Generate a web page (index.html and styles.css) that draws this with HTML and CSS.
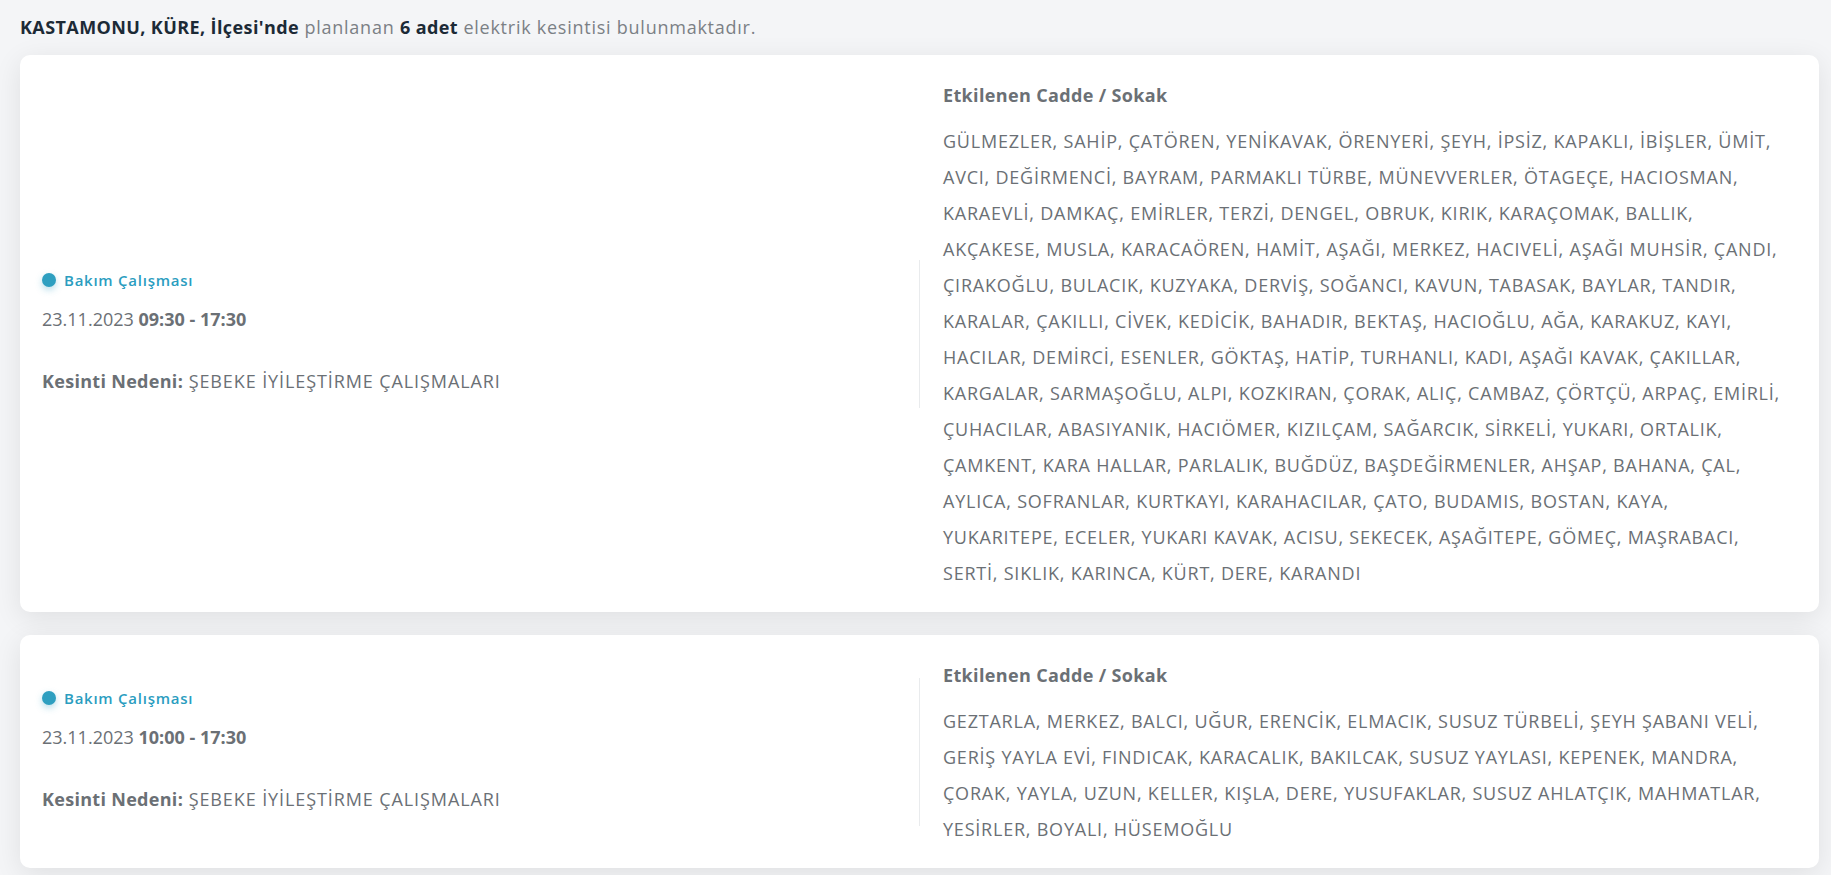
FILE: index.html
```html
<!DOCTYPE html>
<html lang="tr">
<head>
    <meta charset="UTF-8">
    <meta name="viewport" content="width=device-width, initial-scale=1.0">
    <title>Kastamonu Küre Elektrik Kesintileri</title>
    <link rel="stylesheet" href="styles.css">
</head>
<body>
    <p class="summary"><strong>KASTAMONU, KÜRE, İlçesi'nde</strong> planlanan <strong>6 adet</strong> elektrik kesintisi bulunmaktadır.</p>

    <div class="outage-card">
        <div class="outage-info">
            <div class="outage-type"><span class="dot"></span>Bakım Çalışması</div>
            <div class="outage-time">23.11.2023 <strong>09:30 - 17:30</strong></div>
            <div class="outage-reason"><strong>Kesinti Nedeni:</strong> ŞEBEKE İYİLEŞTİRME ÇALIŞMALARI</div>
        </div>
        <div class="divider"></div>
        <div class="outage-streets">
            <h4>Etkilenen Cadde / Sokak</h4>
            <p>GÜLMEZLER, SAHİP, ÇATÖREN, YENİKAVAK, ÖRENYERİ, ŞEYH, İPSİZ, KAPAKLI, İBİŞLER, ÜMİT, AVCI, DEĞİRMENCİ, BAYRAM, PARMAKLI TÜRBE, MÜNEVVERLER, ÖTAGEÇE, HACIOSMAN, KARAEVLİ, DAMKAÇ, EMİRLER, TERZİ, DENGEL, OBRUK, KIRIK, KARAÇOMAK, BALLIK, AKÇAKESE, MUSLA, KARACAÖREN, HAMİT, AŞAĞI, MERKEZ, HACIVELİ, AŞAĞI MUHSİR, ÇANDI, ÇIRAKOĞLU, BULACIK, KUZYAKA, DERVİŞ, SOĞANCI, KAVUN, TABASAK, BAYLAR, TANDIR, KARALAR, ÇAKILLI, CİVEK, KEDİCİK, BAHADIR, BEKTAŞ, HACIOĞLU, AĞA, KARAKUZ, KAYI, HACILAR, DEMİRCİ, ESENLER, GÖKTAŞ, HATİP, TURHANLI, KADI, AŞAĞI KAVAK, ÇAKILLAR, KARGALAR, SARMAŞOĞLU, ALPI, KOZKIRAN, ÇORAK, ALIÇ, CAMBAZ, ÇÖRTÇÜ, ARPAÇ, EMİRLİ, ÇUHACILAR, ABASIYANIK, HACIÖMER, KIZILÇAM, SAĞARCIK, SİRKELİ, YUKARI, ORTALIK, ÇAMKENT, KARA HALLAR, PARLALIK, BUĞDÜZ, BAŞDEĞİRMENLER, AHŞAP, BAHANA, ÇAL, AYLICA, SOFRANLAR, KURTKAYI, KARAHACILAR, ÇATO, BUDAMIS, BOSTAN, KAYA, YUKARITEPE, ECELER, YUKARI KAVAK, ACISU, SEKECEK, AŞAĞITEPE, GÖMEÇ, MAŞRABACI, SERTİ, SIKLIK, KARINCA, KÜRT, DERE, KARANDI</p>
        </div>
    </div>

    <div class="outage-card">
        <div class="outage-info">
            <div class="outage-type"><span class="dot"></span>Bakım Çalışması</div>
            <div class="outage-time">23.11.2023 <strong>10:00 - 17:30</strong></div>
            <div class="outage-reason"><strong>Kesinti Nedeni:</strong> ŞEBEKE İYİLEŞTİRME ÇALIŞMALARI</div>
        </div>
        <div class="divider"></div>
        <div class="outage-streets">
            <h4>Etkilenen Cadde / Sokak</h4>
            <p>GEZTARLA, MERKEZ, BALCI, UĞUR, ERENCİK, ELMACIK, SUSUZ TÜRBELİ, ŞEYH ŞABANI VELİ, GERİŞ YAYLA EVİ, FINDICAK, KARACALIK, BAKILCAK, SUSUZ YAYLASI, KEPENEK, MANDRA, ÇORAK, YAYLA, UZUN, KELLER, KIŞLA, DERE, YUSUFAKLAR, SUSUZ AHLATÇIK, MAHMATLAR, YESİRLER, BOYALI, HÜSEMOĞLU</p>
        </div>
    </div>
</body>
</html>
```

FILE: styles.css
```css
body {
    margin: 0;
    padding: 15px 12px 0 20px;
    background: #f4f5f7;
    font-family: "Open Sans", Arial, sans-serif;
    color: #6b7075;
}
.summary {
    margin: 0 0 16px;
    font-size: 18px;
    line-height: 24px;
    letter-spacing: 0.75px;
    color: #7b8085;
}
.summary strong {
    color: #1c2a36;
    letter-spacing: 0.4px;
}
.outage-card {
    display: flex;
    background: #fff;
    border-radius: 10px;
    box-shadow: 0 6px 28px rgba(0, 0, 0, 0.09);
    margin-bottom: 23px;
}
.outage-info,
.outage-streets {
    flex: 1 1 50%;
    box-sizing: border-box;
}
.outage-info {
    align-self: center;
    padding: 0 22px 5px;
}
.outage-type {
    display: flex;
    align-items: center;
    font-size: 15px;
    font-weight: 600;
    line-height: 20px;
    letter-spacing: 0.75px;
    color: #2b9dbf;
}
.dot {
    width: 14px;
    height: 14px;
    border-radius: 50%;
    background: #2e9fc0;
    box-shadow: 0 3px 7px rgba(46, 159, 192, 0.35);
    margin-right: 8px;
}
.outage-time {
    margin-top: 17px;
    font-size: 18px;
    line-height: 24px;
}
.outage-time strong,
.outage-reason strong {
    font-weight: 700;
}
.outage-reason {
    margin-top: 38px;
    font-size: 18px;
    line-height: 24px;
    letter-spacing: 0.9px;
}
.outage-reason strong {
    letter-spacing: 0.3px;
}
.divider {
    flex: none;
    width: 1px;
    height: 148px;
    align-self: center;
    background: #e9ebed;
}
.outage-streets {
    padding: 28px 36px 21px 23px;
}
.outage-streets h4 {
    margin: 0 0 16px;
    font-size: 18px;
    line-height: 24px;
    letter-spacing: 0.35px;
    font-weight: 700;
}
.outage-streets p {
    margin: 0;
    font-size: 18px;
    line-height: 36px;
    letter-spacing: 0.78px;
}
```
